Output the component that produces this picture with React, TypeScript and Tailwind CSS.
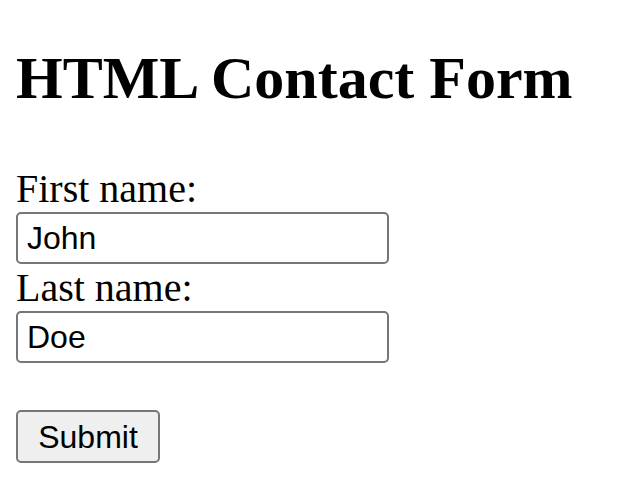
export default function App() {
  return (
    <div className="min-h-screen bg-white p-4 text-black font-['Liberation_Serif','Times_New_Roman',serif]">
      <h1 className="mt-[28px] text-[60px] font-bold leading-[1.15]">HTML Contact Form</h1>
      <form className="mt-[53px] flex flex-col items-start" onSubmit={(e) => e.preventDefault()}>
        <label htmlFor="fname" className="text-[40px] leading-[46px]">
          First name:
        </label>
        <input
          id="fname"
          type="text"
          defaultValue="John"
          className="h-[52px] w-[373px] rounded-[5px] border-2 border-[#767676] bg-white px-[9px] text-[32px] font-['Liberation_Sans',Arial,sans-serif] outline-none"
        />
        <label htmlFor="lname" className="mt-[1px] text-[40px] leading-[46px]">
          Last name:
        </label>
        <input
          id="lname"
          type="text"
          defaultValue="Doe"
          className="h-[52px] w-[373px] rounded-[5px] border-2 border-[#767676] bg-white px-[9px] text-[32px] font-['Liberation_Sans',Arial,sans-serif] outline-none"
        />
        <button
          type="submit"
          className="mt-[47px] h-[53px] w-[144px] rounded-[5px] border-2 border-[#767676] bg-[#efefef] text-[32px] font-['Liberation_Sans',Arial,sans-serif]"
        >
          Submit
        </button>
      </form>
    </div>
  );
}
